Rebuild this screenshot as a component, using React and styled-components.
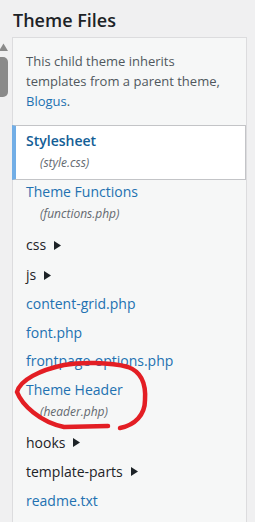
import React from 'react';
import styled, { createGlobalStyle } from 'styled-components';

const GlobalStyle = createGlobalStyle`
  body {
    margin: 0;
    background: #f0f0f1;
    font-family: 'Open Sans', 'Noto Sans', sans-serif;
    color: #1d2327;
  }
`;

const Page = styled.div`
  position: relative;
  width: 255px;
  height: 522px;
  overflow: hidden;
`;

const Title = styled.h2`
  margin: 0;
  padding: 8px 0 5px 13px;
  font-size: 18px;
  line-height: 24px;
  font-weight: 600;
  color: #1d2327;
`;

const Body = styled.div`
  display: flex;
  align-items: flex-start;
`;

const ScrollTrack = styled.div`
  width: 12px;
  flex: none;
  display: flex;
  flex-direction: column;
  padding-top: 6px;
`;

const ScrollArrow = styled.svg`
  display: block;
  width: 8px;
  height: 8px;
`;

const ScrollThumb = styled.div`
  width: 8px;
  height: 40px;
  margin-top: 6px;
  background: #8a8a8a;
  border-radius: 0 5px 5px 0;
`;

const Panel = styled.div`
  flex: 1;
  margin-right: 8px;
  height: 520px;
  background: #f6f7f7;
  border: 1px solid #dcdcde;
  border-bottom: none;
`;

const Intro = styled.p`
  margin: 0;
  padding: 13px 12px 14px 13px;
  font-size: 13px;
  line-height: 20px;
  color: #50575e;
`;

const Link = styled.a`
  color: #2271b1;
  text-decoration: none;
`;

const List = styled.ul`
  list-style: none;
  margin: 0 0 0 -1px;
  padding: 0;
`;

const Item = styled.li`
  padding: ${(p) => (p.current ? '5px 0 6px 10px' : `2px 0 ${p.pad}px 14px`)};
  background: ${(p) => (p.current ? '#fff' : 'transparent')};
  border: ${(p) => (p.current ? '1px solid #c3c4c7' : 'none')};
  border-left: ${(p) => (p.current ? '4px solid #72aee6' : 'none')};
`;

const Name = styled.span`
  display: flex;
  align-items: center;
  gap: 8px;
  font-size: 14px;
  line-height: 20px;
  font-weight: ${(p) => (p.current ? 600 : 400)};
  color: ${(p) => (p.folder ? '#1d2327' : p.current ? '#135e96' : '#2271b1')};
`;

const Desc = styled.span`
  display: block;
  margin: 1px 0 0 14px;
  font-size: 12px;
  line-height: 21px;
  font-style: italic;
  color: #646970;
`;

const Arrow = () => (
  <svg width="7" height="9" viewBox="0 0 7 9">
    <polygon points="0,0 7,4.5 0,9" fill="#1d2327" />
  </svg>
);

const Annotation = styled.svg`
  position: absolute;
  top: 0;
  left: 0;
  pointer-events: none;
`;

const files = [
  { name: 'Stylesheet', desc: '(style.css)', current: true },
  { name: 'Theme Functions', desc: '(functions.php)' },
  { name: 'css', folder: true, pad: 8 },
  { name: 'js', folder: true },
  { name: 'content-grid.php' },
  { name: 'font.php' },
  { name: 'frontpage-options.php' },
  { name: 'Theme Header', desc: '(header.php)' },
  { name: 'hooks', folder: true },
  { name: 'template-parts', folder: true },
  { name: 'readme.txt' },
];

const padFor = (f) => {
  if (f.pad) return f.pad;
  if (f.desc) return 9;
  if (f.folder) return 7;
  return 6.5;
};

const App = () => (
  <Page>
    <GlobalStyle />
    <Title>Theme Files</Title>
    <Body>
      <ScrollTrack>
        <ScrollArrow viewBox="0 0 8 8">
          <polygon points="-1,8 3.5,0.5 8,8" fill="#8a8a8a" />
        </ScrollArrow>
        <ScrollThumb />
      </ScrollTrack>
      <Panel>
        <Intro>
          This child theme inherits templates from a parent theme, <Link href="#">Blogus</Link>.
        </Intro>
        <List>
          {files.map((f) => (
            <Item key={f.name} current={f.current} pad={padFor(f)}>
              <Name current={f.current} folder={f.folder}>
                {f.name}
                {f.folder && <Arrow />}
              </Name>
              {f.desc && <Desc>{f.desc}</Desc>}
            </Item>
          ))}
        </List>
      </Panel>
    </Body>
    <Annotation width="255" height="522" viewBox="0 0 255 522">
      <path
        d="M120 428 C135 425 145 415 145 400 C146 385 142 372 128 367 C110 362 80 362 64 365 C40 370 20 380 17 392 C22 405 40 422 64 427 L108 426"
        fill="none"
        stroke="#e31e24"
        strokeWidth="4.5"
        strokeLinecap="round"
        strokeLinejoin="round"
      />
    </Annotation>
  </Page>
);

export default App;
